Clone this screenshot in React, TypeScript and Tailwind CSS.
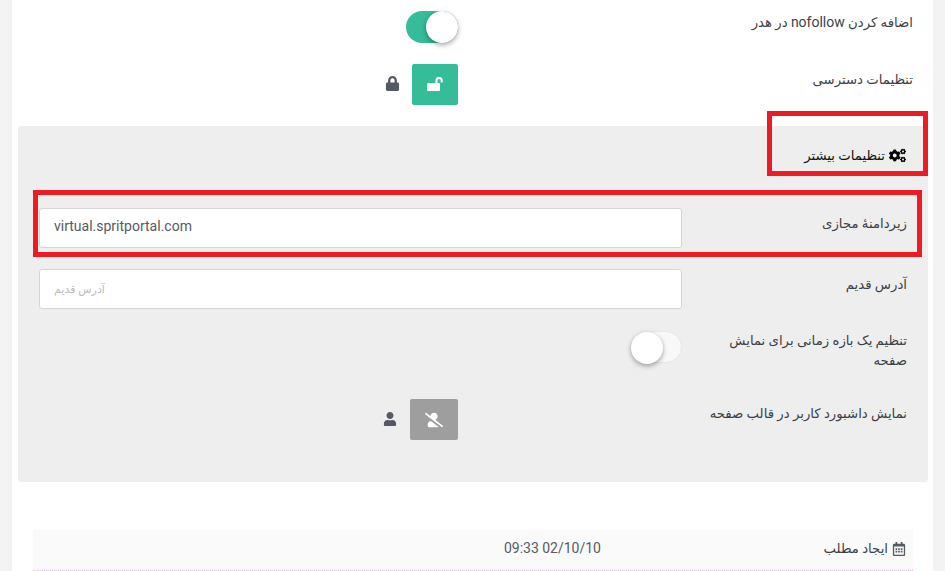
import React from "react";
import { FaLock, FaUser, FaUserSlash, FaCogs, FaRegCalendarAlt } from "react-icons/fa";

const font = "font-['Roboto','DejaVu_Sans',sans-serif]";

function Toggle({ on }: { on: boolean }) {
  return (
    <div className={`flex h-8 w-[52px] rounded-full ${on ? "justify-end bg-[#35bc98]" : "justify-start border border-[#e8e8e8] bg-[#f8f8f8]"}`} dir="ltr">
      <div className="h-8 w-8 shrink-0 rounded-full bg-white shadow-[0_2px_5px_rgba(0,0,0,0.35)]" />
    </div>
  );
}

function OpenLock() {
  return (
    <svg width="16" height="14" viewBox="0 0 16 14" className="mb-[2px] text-white">
      <rect x="0" y="6" width="13" height="8" rx="1" fill="currentColor" />
      <path d="M9.5 6.5V3.5a2.6 2.6 0 0 1 5.2 0v2" fill="none" stroke="currentColor" strokeWidth="2" />
    </svg>
  );
}

export default function App() {
  return (
    <div className={`${font} relative h-[571px] w-[945px] overflow-hidden bg-[#f3f3f3] text-[13.25px] text-[#3b3f46]`} dir="rtl">
      <div className="mx-3 h-full w-[921px] bg-white">
        {/* top rows */}
        <div className="pt-[11px] pr-5 pl-[373px]">
          <div className="flex h-8 items-start justify-between">
            <span className="pt-[1px] leading-5">اضافه کردن <span className="text-[14px]">nofollow</span> در هدر</span>
            <div dir="ltr" className="flex w-[73px] justify-end">
              <Toggle on />
            </div>
          </div>
          <div className="mt-[21px] flex h-[41px] items-start justify-between">
            <span className="pt-[6px] leading-5">تنظیمات دسترسی</span>
            <div dir="ltr" className="flex w-[73px] items-center justify-end gap-[12px]">
              <FaLock className="mb-[2px] text-[15px] text-[#555a62]" />
              <div className="flex h-[41px] w-[46px] items-center justify-center rounded-[2px] bg-[#35bc98]">
                <OpenLock />
              </div>
            </div>
          </div>
        </div>

        {/* panel */}
        <div className="mt-[21px] mr-[5px] h-[356px] w-[910px] rounded-[4px] bg-[#eeeeee] px-[21px]">
          <div className="flex items-center gap-1 pt-[20px] leading-5 text-[#111]">
            <FaCogs className="mr-px mb-[2px] text-[17px] text-black" />
            <span className="font-medium">تنظیمات بیشتر</span>
          </div>
          <div className="mt-[42px] flex h-10 items-start justify-between">
            <span className="pt-[6px] leading-5">زیردامنهٔ مجازی</span>
            <input
              readOnly
              dir="ltr"
              value="virtual.spritportal.com"
              className="h-10 w-[643px] rounded-[3px] border border-[#d6d6d6] bg-white px-[14px] pb-[4px] text-[14px] text-[#555a62] outline-none"
            />
          </div>
          <div className="mt-[21px] flex h-10 items-start justify-between">
            <span className="pt-[6px] leading-5">آدرس قدیم</span>
            <input
              readOnly
              dir="ltr"
              placeholder="آدرس قدیم"
              className="h-10 w-[643px] rounded-[3px] border border-[#d6d6d6] bg-white px-[14px] text-left text-[11px] outline-none placeholder:text-[#bbbbbb]"
            />
          </div>
          <div className="mt-[22px] flex items-start justify-between">
            <span className="w-[185px] leading-[20px]">تنظیم یک بازه زمانی برای نمایش صفحه</span>
            <div className="w-[643px]">
              <Toggle on={false} />
            </div>
          </div>
          <div className="mt-[28px] flex items-start justify-between">
            <span className="pt-[5px] leading-5">نمایش داشبورد کاربر در قالب صفحه</span>
            <div dir="ltr" className="ml-[344px] flex items-center gap-[13px]">
              <FaUser className="mb-[2px] text-[14px] text-[#555a62]" />
              <div className="flex h-[41px] w-[48px] items-center justify-center rounded-[2px] bg-[#9e9e9e]">
                <FaUserSlash className="text-[18px] text-white" />
              </div>
            </div>
          </div>
        </div>

        {/* bottom row */}
        <div className="mt-[48px] mr-5 ml-[21px] flex h-[41px] items-center border-b border-dotted border-[#e8b8de] bg-[#fafafa] pr-[7px] pb-[3px]">
          <span className="flex w-[305px] items-center gap-1">
            <FaRegCalendarAlt className="text-[14px] text-[#555a62]" />
            ایجاد مطلب
          </span>
          <span dir="ltr" className="text-[14px] text-[#555a62]">09:33 02/10/10</span>
        </div>
      </div>

      {/* annotation boxes */}
      <div className="absolute top-[111px] left-[767px] h-[65px] w-[161px] border-[5px] border-[#ed1c24]" />
      <div className="absolute top-[190px] left-[33px] h-[67px] w-[889px] border-[5px] border-[#ed1c24]" />
    </div>
  );
}
